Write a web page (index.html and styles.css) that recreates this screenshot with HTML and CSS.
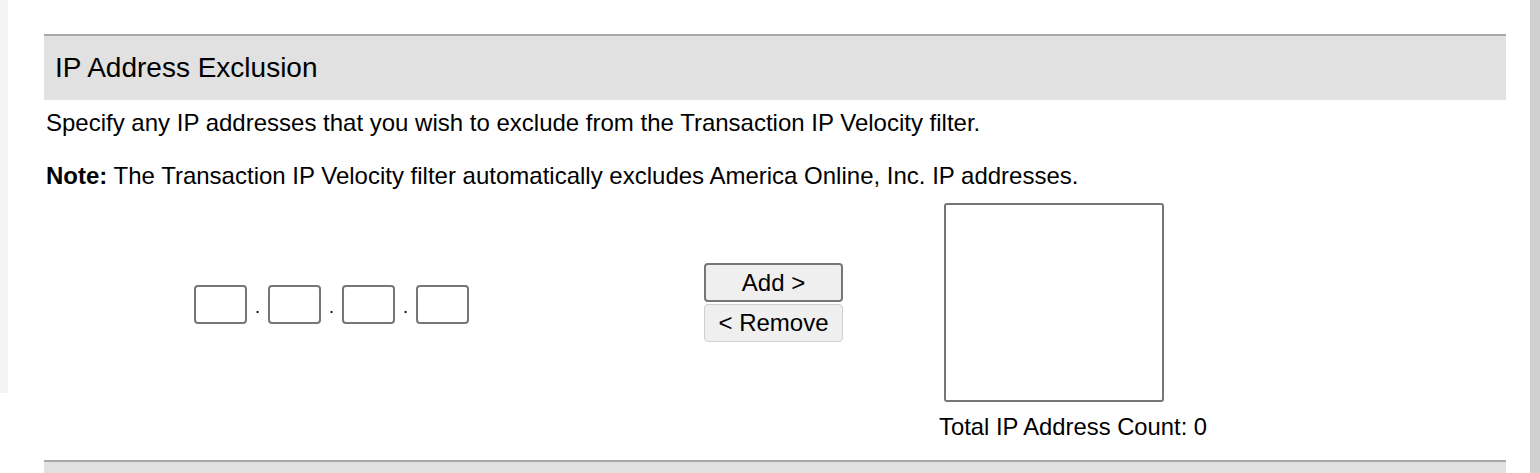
FILE: index.html
```html
<!DOCTYPE html>
<html lang="en">
<head>
<meta charset="utf-8">
<title>IP Address Exclusion</title>
<link rel="stylesheet" href="styles.css">
</head>
<body>
<div class="page">
  <div class="left-gutter"><div class="shade"></div></div>
  <main class="main">
    <section class="section">
      <h2 class="section-header">IP Address Exclusion</h2>
      <p class="intro">Specify any IP addresses that you wish to exclude from the Transaction IP Velocity filter.</p>
      <p class="note"><strong>Note:</strong> The Transaction IP Velocity filter automatically excludes America Online, Inc. IP addresses.</p>
      <div class="controls">
        <div class="ip-col">
          <div class="ip-group">
            <input class="octet" type="text" maxlength="3" aria-label="Octet 1">
            <span class="dot">.</span>
            <input class="octet" type="text" maxlength="3" aria-label="Octet 2">
            <span class="dot">.</span>
            <input class="octet" type="text" maxlength="3" aria-label="Octet 3">
            <span class="dot">.</span>
            <input class="octet" type="text" maxlength="3" aria-label="Octet 4">
          </div>
        </div>
        <div class="btn-col">
          <button class="btn btn-add" type="button">Add &gt;</button>
          <button class="btn btn-remove" type="button">&lt; Remove</button>
        </div>
        <div class="list-col">
          <select class="listbox" multiple aria-label="Excluded IP addresses"></select>
        </div>
        <div class="count">Total IP Address Count: 0</div>
      </div>
    </section>
    <section class="section next">
      <div class="section-header"></div>
    </section>
  </main>
  <div class="right-gutter"><div class="scrollbar"></div></div>
</div>
</body>
</html>
```

FILE: styles.css
```css
html, body {
  margin: 0;
  padding: 0;
  height: 473px;
  overflow: hidden;
  background: #ffffff;
}

body {
  font-family: "Liberation Sans", Arial, Helvetica, sans-serif;
  color: #000000;
}

.page {
  display: flex;
  height: 473px;
  overflow: hidden;
}

.left-gutter {
  width: 44px;
  flex: none;
}

.shade {
  width: 8px;
  height: 393px;
  background: #f3f3f3;
}

.main {
  width: 1462px;
  height: 473px;
  overflow: hidden;
  flex: none;
}

.right-gutter {
  flex: 1;
  display: flex;
  justify-content: flex-end;
}

.scrollbar {
  width: 10px;
  height: 473px;
  background: #d0d0d0;
}

.section {
  margin-top: 34px;
}

.section.next {
  margin-top: 20px;
}

.section-header {
  margin: 0;
  height: 66px;
  box-sizing: border-box;
  border-top: 2px solid #a9a9a9;
  background: #e1e1e1;
  padding-left: 11px;
  font-size: 28px;
  font-weight: normal;
  display: flex;
  align-items: center;
}

.intro,
.note {
  margin: 0;
  padding-left: 2px;
  font-size: 24px;
  line-height: 28px;
}

.intro {
  margin-top: 9px;
}

.note {
  margin-top: 25px;
}

.controls {
  margin-top: 13px;
  display: grid;
  grid-template-columns: 575px 309px 1fr;
  grid-template-rows: auto auto;
}

.ip-col {
  grid-column: 1;
  grid-row: 1;
  align-self: center;
  display: flex;
  justify-content: center;
  padding-top: 4px;
}

.ip-group {
  display: flex;
  align-items: flex-end;
}

.octet {
  width: 53px;
  height: 39px;
  box-sizing: border-box;
  border: 2px solid #767676;
  border-radius: 4px;
  background: #ffffff;
  margin: 0;
  padding: 0 4px;
  font-family: inherit;
  font-size: 20px;
}

.dot {
  width: 21px;
  text-align: center;
  font-size: 18px;
  line-height: 18px;
  padding-bottom: 8px;
  color: #000000;
}

.btn-col {
  grid-column: 2;
  grid-row: 1;
  align-self: center;
  display: flex;
  flex-direction: column;
  align-items: center;
  gap: 2px;
}

.btn {
  width: 139px;
  margin: 0;
  padding: 0;
  box-sizing: border-box;
  background: #efefef;
  color: #000000;
  font-family: inherit;
  font-size: 24px;
  border-radius: 4px;
}

.btn-add {
  height: 39px;
  border: 2px solid #767676;
}

.btn-remove {
  height: 38px;
  border: 1px solid #cfcfcf;
}

.list-col {
  grid-column: 3;
  grid-row: 1;
  padding-left: 16px;
}

.listbox {
  display: block;
  width: 220px;
  height: 199px;
  box-sizing: border-box;
  margin: 0;
  border: 2px solid #767676;
  border-radius: 3px;
  background: #ffffff;
}

.count {
  grid-column: 3;
  grid-row: 2;
  padding-left: 11px;
  margin-top: 11px;
  font-size: 23.8px;
  line-height: 27px;
}
```
